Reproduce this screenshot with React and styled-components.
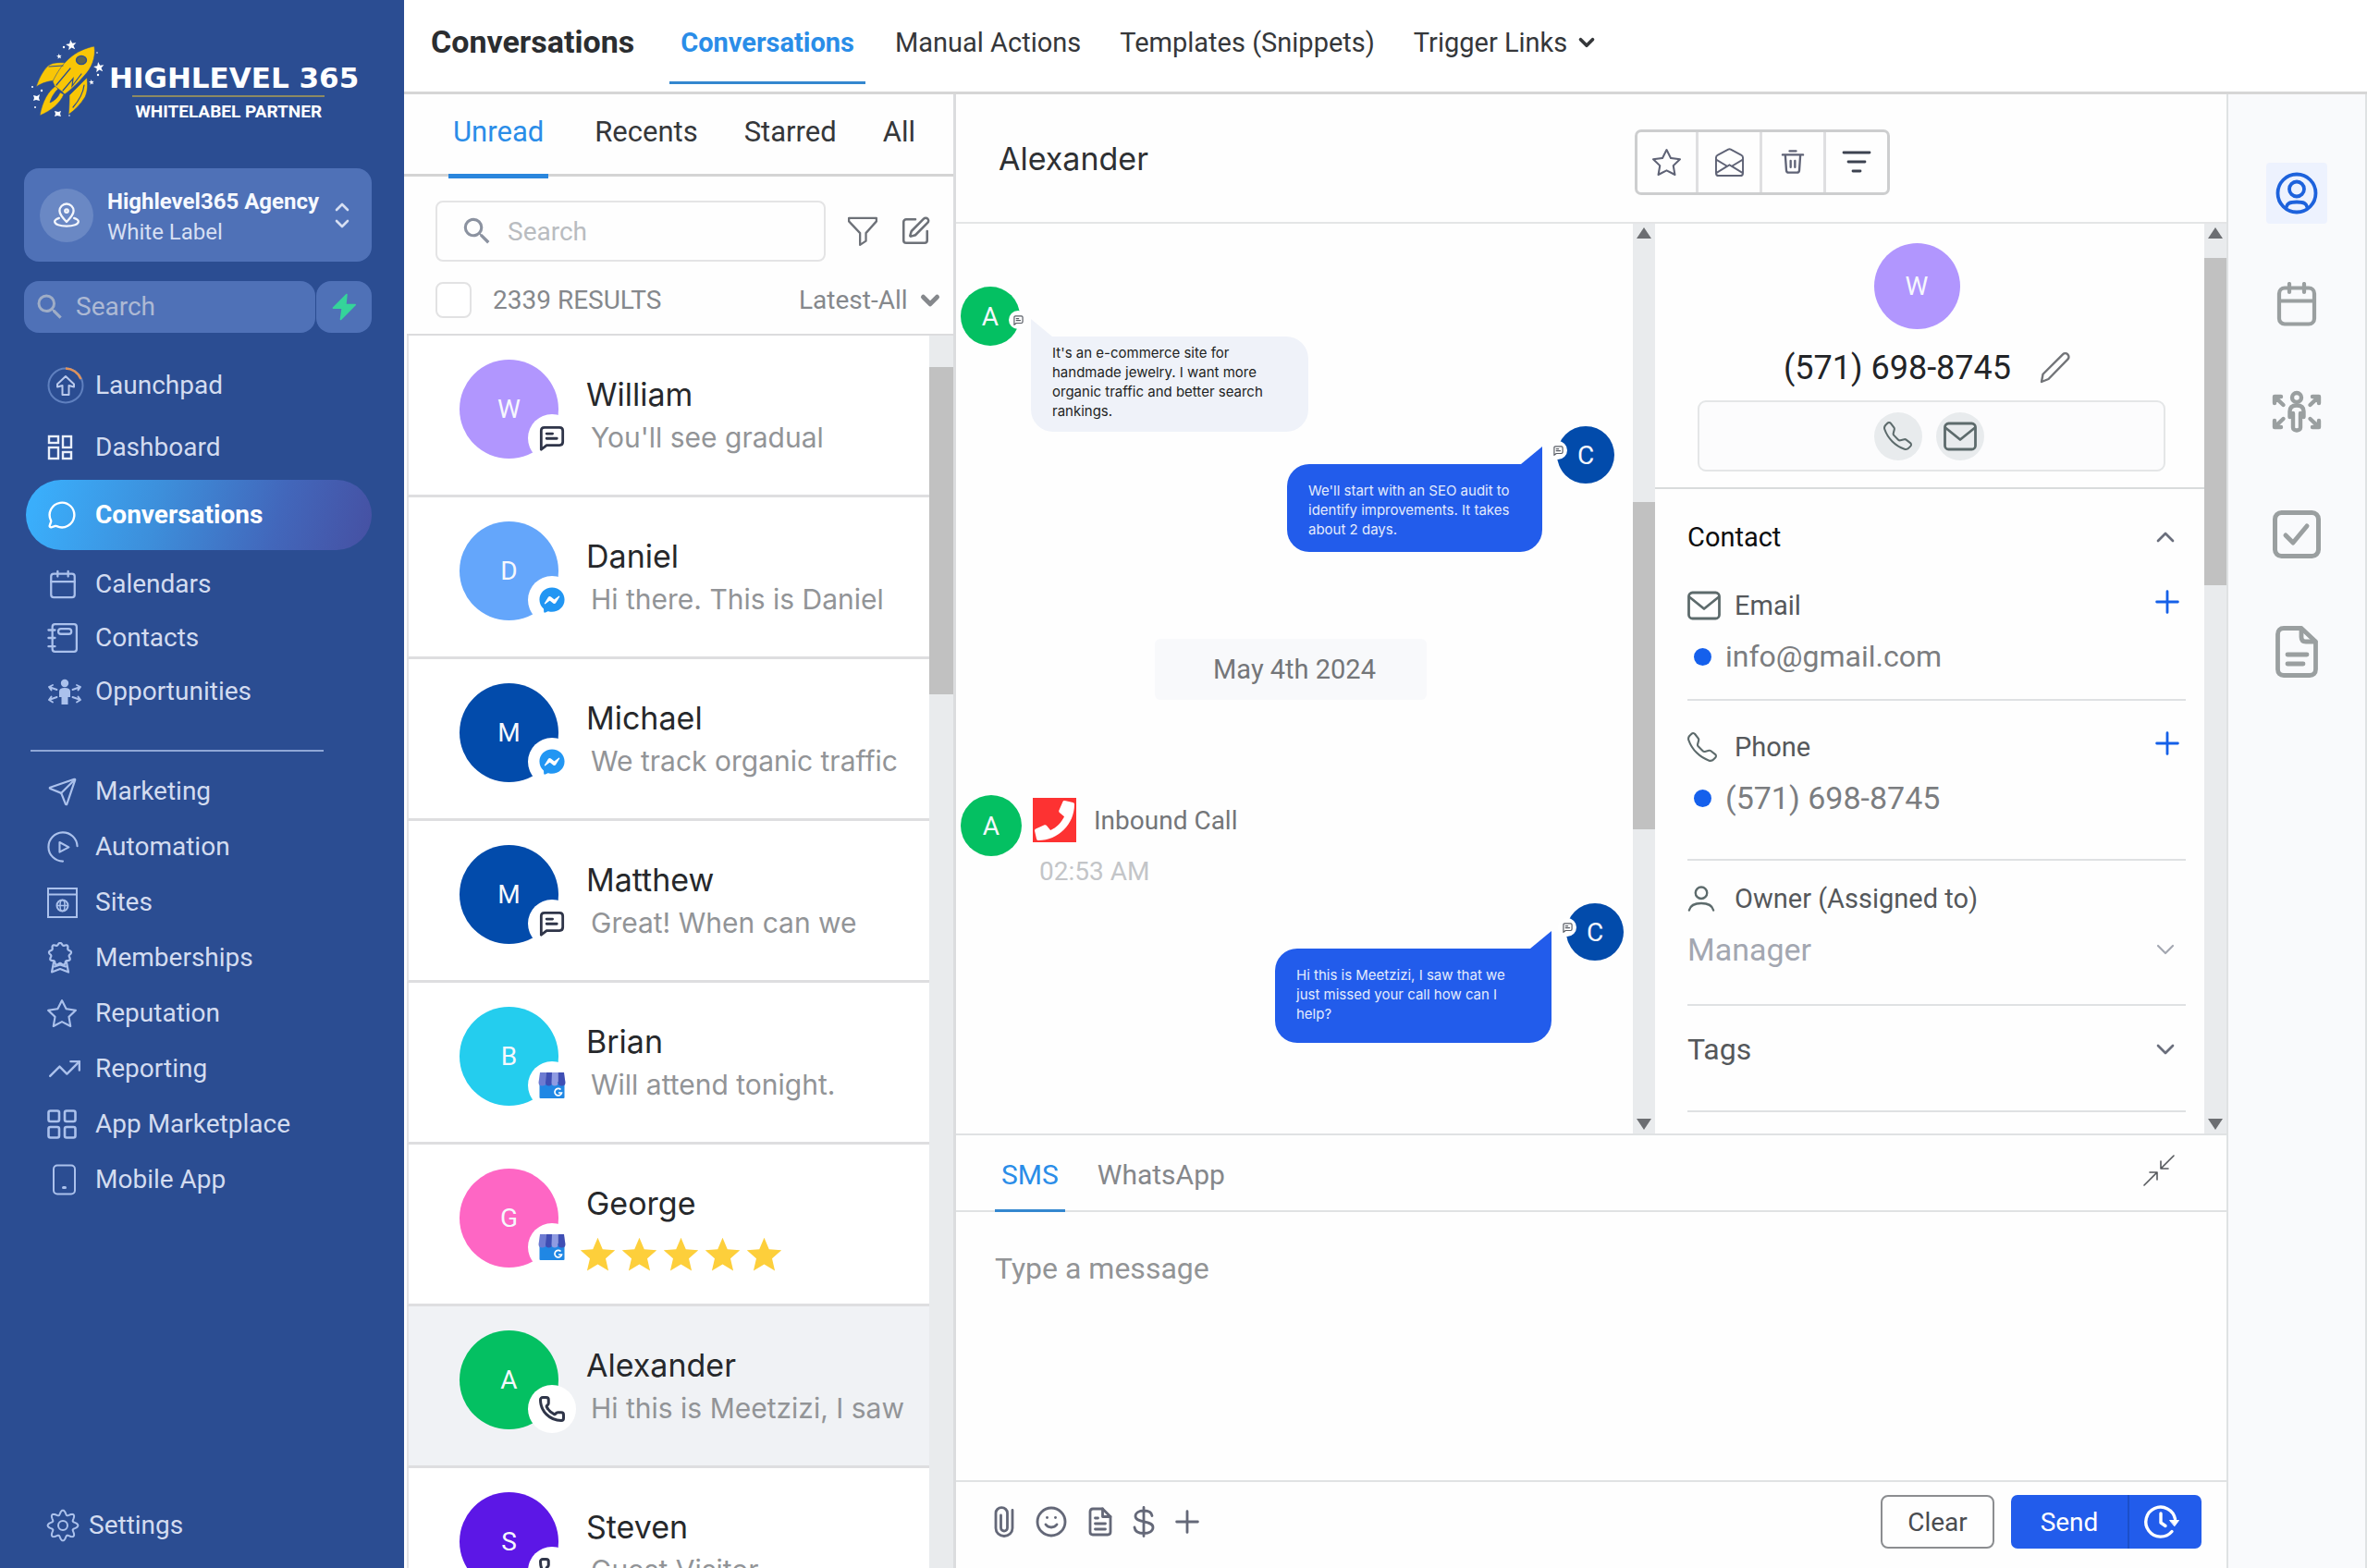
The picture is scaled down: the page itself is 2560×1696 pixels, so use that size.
import React, { useState } from 'react';
import styled, { createGlobalStyle, css } from 'styled-components';
import {
  Calendar,
  ChevronDown,
  ChevronUp,
  MessageCircle,
  Phone,
  Send,
  Smile,
  SquarePen,
  TrendingUp,
} from 'lucide-react';
import { FaFacebookMessenger, FaPhone } from 'react-icons/fa';
import { BsEnvelopeOpen, BsStar, BsTelephone } from 'react-icons/bs';
import { MdSearch, MdStar } from 'react-icons/md';

const GlobalStyle = createGlobalStyle`
  * {
    box-sizing: border-box;
  }

  body {
    margin: 0;
    font-family: Roboto, 'Liberation Sans', sans-serif;
    color: #2e3033;
    background-color: #fefefe;
  }

  button, input, select, textarea {
    font: inherit;
    color: inherit;
    background: none;
    border: none;
    padding: 0;
    margin: 0;
    outline: none;
  }

  button {
    cursor: pointer;
  }

  a {
    color: inherit;
    text-decoration: none;
  }

  ul {
    list-style: none;
    margin: 0;
    padding: 0;
  }

  h1, h2, h3, p {
    margin: 0;
    font-size: inherit;
    font-weight: 400;
  }

  svg {
    display: block;
    flex-shrink: 0;
  }
`;

/* ---------- icons ---------- */

const Stroke = ({ w = 32, h, box = '0 0 24 24', sw = 2, children }) => (
  <svg
    width={w}
    height={h || w}
    viewBox={box}
    fill="none"
    stroke="currentColor"
    strokeWidth={sw}
    strokeLinecap="round"
    strokeLinejoin="round"
    aria-hidden="true"
  >
    {children}
  </svg>
);

const star = (cx, cy, r) => {
  const points = [];
  for (let i = 0; i < 10; i++) {
    const a = (Math.PI / 5) * i - Math.PI / 2 - 0.15;
    const d = i % 2 ? r * 0.42 : r;
    points.push(`${cx + d * Math.cos(a)},${cy + d * Math.sin(a)}`);
  }
  return points.join(' ');
};

const RocketLogo = () => (
  <svg width="84" height="96" viewBox="4 2 84 96" aria-hidden="true">
    <g fill="#f9c606" stroke="#2b4d92" strokeWidth="0.6">
      <path d="M46 36 C36 35 30 36 26 39 C20 45 16 53 13 62 C20 57 27 56 33 55 Z" />
      <path d="M68 52 C69 60 69 66 66 73 C61 81 55 87 48 92 C49 84 49 77 49 71 Z" />
      <path d="M34 61 C26 67 20 77 17 93 C29 88 39 80 43 70 L39 68 C37 73 33 77 28 79 C30 72 33 68 37 64 Z" />
      <path d="M76 18 C78 30 73 42 65 50 C58 58 52 64 44 70 L41 67 L33 61 L31 56 C36 46 41 38 49 31 C57 24 66 20 76 18 Z" />
    </g>
    <g fill="none" stroke="#2b4d92" strokeWidth="1.2" strokeLinecap="round">
      <path d="M35 60 L50 42 M42 66 L53 53 L52 61 L62 48 M27 40 L42 39 M65 60 C64 68 60 76 53 84" />
    </g>
    <ellipse cx="62" cy="33" rx="5.5" ry="4.6" fill="#5c6458" stroke="#2b4d92" strokeWidth="1.4" />
    <g fill="#ffffff">
      <polygon points={star(51, 17, 6)} />
      <polygon points={star(81, 41, 6)} />
      <polygon points={star(38, 29, 3)} />
      <polygon points={star(73, 57, 3)} />
      <path d="M10 71 L14 72 L17 70 L16 74 L17 77 L13 76 L10 77 L11 74 Z" />
      <path d="M33 88 L37 89 L40 88 L39 91 L40 94 L36 93 L33 94 L34 91 Z" />
      <circle cx="43" cy="19" r="1.2" />
      <circle cx="19" cy="66" r="1.2" />
      <circle cx="80" cy="49" r="1.2" />
      <circle cx="12" cy="84" r="1" />
      <circle cx="9" cy="62" r="1" />
      <circle cx="79" cy="25" r="0.8" />
      <circle cx="49" cy="93" r="0.8" />
    </g>
  </svg>
);

const PlaceIcon = () => (
  <Stroke w={28} sw={2}>
    <path d="M12 18C8.500 14.500 5.500 11.200 5.500 7.800a6.500 6.500 0 0 1 13 0c0 3.400-3 6.700-6.500 10.200z" />
    <circle cx="12" cy="7.800" r="1.500" />
    <path d="M5 14.500c-2.300.8-4 1.900-4 3.300 0 2.400 4.900 4.200 11 4.200s11-1.800 11-4.200c0-1.400-1.700-2.500-4-3.300" />
  </Stroke>
);

const BoltIcon = () => (
  <svg width="28" height="30" viewBox="0 0 24 26" fill="#35d49a" stroke="#35d49a" strokeWidth="1.500" strokeLinejoin="round" aria-hidden="true">
    <path d="M14.500 1.500 2 14h8.500L9 24.500 22.500 11h-9z" />
  </svg>
);

const LaunchIcon = () => (
  <svg width="40" height="40" viewBox="0 0 40 40" fill="none" aria-hidden="true">
    <circle cx="20" cy="20" r="18.500" stroke="#5f80bf" strokeWidth="2" />
    <path d="M20 1.500 A18.500 18.500 0 0 1 36.500 13" stroke="#e0925a" strokeWidth="2.500" />
    <path
      d="M20 10 L29 18.500 V21.500 L23.500 20 V30 H16.500 V20 L11 21.500 V18.500 Z"
      stroke="#b9c9ec"
      strokeWidth="2"
      strokeLinejoin="round"
    />
  </svg>
);

const DashboardIcon = () => (
  <svg width="28" height="28" viewBox="0 0 28 28" fill="none" stroke="#e9effb" strokeWidth="2.400" aria-hidden="true">
    <rect x="2" y="2" width="10" height="7" />
    <rect x="17" y="2" width="9" height="12" />
    <rect x="2" y="14" width="10" height="12" />
    <rect x="17" y="19" width="9" height="7" />
  </svg>
);

const ContactsIcon = () => (
  <Stroke w={34} sw={1.6}>
    <rect x="4" y="1.500" width="18.500" height="21" rx="2" />
    <rect x="8.500" y="5" width="10" height="4" rx="2" />
    <path d="M1 6h5M1 12h5M1 18.500h5" />
  </Stroke>
);

const PeopleArrowsIcon = () => (
  <svg width="38" height="32" viewBox="0 0 38 32" aria-hidden="true">
    <g fill="currentColor">
      <circle cx="19" cy="7" r="4.200" />
      <path d="M13 16c0-2.500 2-4 6-4s6 1.500 6 4v6h-2.500v8h-7v-8H13z" />
    </g>
    <g fill="none" stroke="currentColor" strokeWidth="1.900" strokeLinecap="round" strokeLinejoin="round">
      <path d="M10.500 14 2 11M6 9l-4 2 2.500 3.500M10.500 22 2 25M4.500 21.500 2 25l4 2.500M27.500 14 36 11M32 9l4 2-2.500 3.500M27.500 22l8.500 3M33.500 21.500 36 25l-4 2.500" />
    </g>
  </svg>
);

const AutomationIcon = () => (
  <Stroke w={34} sw={1.5}>
    <path d="M12 23A11 11 0 1 1 23 11.500" />
    <path d="M9.500 8.500v7.500l7-3.700z" />
  </Stroke>
);

const SitesIcon = () => (
  <svg width="33" height="33" viewBox="0 0 33 33" fill="none" stroke="currentColor" strokeWidth="2" aria-hidden="true">
    <rect x="1" y="1" width="31" height="31" />
    <path d="M1 7.500h31" />
    <circle cx="16.500" cy="19.500" r="6" />
    <ellipse cx="16.500" cy="19.500" rx="2.500" ry="6" strokeWidth="1.500" />
    <path d="M10.500 19.500h12" strokeWidth="1.500" />
  </svg>
);

const scalloped = (cx, cy, r, depth, lobes) => {
  let d = '';
  for (let i = 0; i <= 120; i++) {
    const a = (Math.PI * 2 * i) / 120;
    const k = r + depth * Math.cos(lobes * a);
    d += `${i ? 'L' : 'M'}${(cx + k * Math.sin(a)).toFixed(2)} ${(cy - k * Math.cos(a)).toFixed(2)}`;
  }
  return `${d}Z`;
};

const RibbonIcon = () => (
  <Stroke w={28} h={34} box="0 0 28 34" sw={2.2}>
    <path d={scalloped(14, 13, 11, 1.2, 9)} />
    <path d="M7 22 L5 32.500 L14 29 L23 32.500 L21 22 M8 26.500 L14 24.500 L20 26.500" />
  </Stroke>
);

const GridIcon = () => (
  <Stroke w={32} box="0 0 32 32" sw={2.6}>
    <rect x="1.500" y="1.500" width="11.500" height="11.500" rx="2" />
    <rect x="19" y="1.500" width="11.500" height="11.500" rx="2" />
    <rect x="1.500" y="19" width="11.500" height="11.500" rx="2" />
    <rect x="19" y="19" width="11.500" height="11.500" rx="2" />
  </Stroke>
);

const MobileIcon = () => (
  <Stroke w={38} h={34} box="0 0 38 34" sw={2}>
    <rect x="7" y="1.500" width="23" height="31" rx="4" />
    <path d="M17.500 25.500h2" strokeWidth="3" />
  </Stroke>
);

const GearIcon = () => (
  <Stroke w={36} box="0 0 36 36" sw={2}>
    <path d={scalloped(18, 18, 14, 2.4, 8)} />
    <circle cx="18" cy="18" r="5" />
  </Stroke>
);

const SmsIcon = ({ size = 28, sw = 2.4 }) => (
  <Stroke w={size} sw={sw}>
    <path d="M2 22.500V5c0-2 1-3 3-3h14c2 0 3 1 3 3v10.500c0 2-1 3-3 3H7z" />
    <path d="M7 7.800h5.500M7 12.200h9.500" />
  </Stroke>
);

const FunnelIcon = () => (
  <Stroke w={34} sw={1.6}>
    <path d="M1.500 2h21v2.500l-8 9v6L10 22.500v-9l-8.500-9z" />
  </Stroke>
);

const TrashIcon = () => (
  <Stroke w={28} sw={2}>
    <path d="M2.500 5.500h19M9 2h6M5 5.500l1 14.500c.1 1.300 1 2 2.200 2h7.600c1.200 0 2.100-.7 2.200-2l1-14.500M10 11v6M14 11v6" />
  </Stroke>
);

const LinesIcon = () => (
  <Stroke w={32} h={26} box="0 0 32 26" sw={2.8}>
    <path d="M2 3h28M7 13h18M12 23h8" />
  </Stroke>
);

const PencilIcon = () => (
  <Stroke w={36} sw={1.6}>
    <path d="M2 22l1-5.500L17.300 2.200c1-1 2.600-1 3.600 0s1 2.600 0 3.600L7 20z" />
  </Stroke>
);

const MailIcon = () => (
  <Stroke w={36} h={32} box="0 0 36 32" sw={2.8}>
    <rect x="1.500" y="2" width="33" height="28" rx="4" />
    <path d="M2.500 7 L18 19.500 L33.500 7" />
  </Stroke>
);

const PersonIcon = () => (
  <Stroke w={30} sw={1.9}>
    <circle cx="12" cy="7" r="5" />
    <path d="M1.500 22c1-4 5-6 10.500-6s9.500 2 10.500 6" />
  </Stroke>
);

const PlusIcon = () => (
  <Stroke w={26} sw={2.6}>
    <path d="M12 1.500v21M1.500 12h21" />
  </Stroke>
);

const ProfileIcon = () => (
  <Stroke w={46} box="0 0 46 46" sw={3.8}>
    <circle cx="23" cy="23" r="20.500" />
    <circle cx="23" cy="18.500" r="8" />
    <path d="M11.500 38.500c1-4.500 4-6 11.500-6s10.500 1.500 11.500 6" />
  </Stroke>
);

const RailCalendarIcon = () => (
  <Stroke w={44} h={48} box="0 0 44 48" sw={4.2}>
    <rect x="3" y="6.500" width="38" height="39" rx="6" />
    <path d="M3 20.500h38M14 2v9M30 2v9" />
  </Stroke>
);

const RailPeopleIcon = () => (
  <Stroke w={54} h={46} box="0 0 54 46" sw={4.4}>
    <circle cx="27" cy="8" r="5" />
    <path d="M19.500 29v-6c0-4 2.500-6.500 7.500-6.500s7.500 2.500 7.500 6.500v6M23 25v15.500c0 4 8 4 8 0V25" />
    <path d="M3 14V7h7M4 8l8.500 8M51 14V7h-7M50 8l-8.500 8M3 33v7h7M4 39l8.500-8M51 33v7h-7M50 39l-8.500-8" />
  </Stroke>
);

const RailCheckIcon = () => (
  <Stroke w={52} box="0 0 52 52" sw={5}>
    <rect x="2.500" y="2.500" width="47" height="47" rx="7" />
    <path d="M14 27l8 8 15-18" />
  </Stroke>
);

const RailFileIcon = () => (
  <Stroke w={46} h={56} box="0 0 46 56" sw={4.8}>
    <path d="M28 2.500H9c-4 0-6.500 2.500-6.500 6.500v38c0 4 2.500 6.500 6.500 6.500h28c4 0 6.500-2.500 6.500-6.500V17z" />
    <path d="M28 3v9c0 3.500 1.500 5 5 5h10M13 31h21M13 41h17" />
  </Stroke>
);

const CollapseIcon = () => (
  <Stroke w={36} box="0 0 36 36" sw={1.6}>
    <path d="M34 2 20 16M20 8v8h8M2 34l14-14M8 20h8v8" />
  </Stroke>
);

const ClipIcon = () => (
  <Stroke w={22} h={34} box="0 0 22 34" sw={2.8}>
    <path d="M20 4.500v19.500a9 8.500 0 0 1-18 0V7.500a6.200 5.800 0 0 1 12.500 0v16a3.500 3.500 0 0 1-7 0V10" />
  </Stroke>
);

const DocIcon = () => (
  <Stroke w={26} h={32} box="0 0 26 32" sw={2.8}>
    <path d="M15.500 2H5C3 2 2 3 2 5v22c0 2 1 3 3 3h16c2 0 3-1 3-3V10.500z" />
    <path d="M15.500 2v8.500H24M7.500 12h3M7.500 18h11M7.500 24h11" />
  </Stroke>
);

const DollarIcon = () => (
  <Stroke w={24} h={34} box="0 0 24 34" sw={2.8}>
    <path d="M12 1.500v31M21 10.500c-.5-3.500-4-5.500-9-5.500s-9 2.200-9 6c0 7.500 19 4 19 12 0 4-4 6.500-10 6.500S2.500 27 2 23" />
  </Stroke>
);

const ScheduleIcon = () => (
  <Stroke w={40} box="0 0 40 40" sw={3.4}>
    <path d="M32 30.500A16 16 0 1 1 35.500 17M20 11v10l5 3.500" />
    <path d="M30 18.500h9.500L35 24.500z" fill="currentColor" strokeWidth="1" />
  </Stroke>
);

const ShopIcon = () => (
  <svg width="30" height="28" viewBox="0 0 30 28" aria-hidden="true">
    <rect x="1.500" y="10" width="27" height="18" rx="1" fill="#2087e4" />
    <path d="M2 0h6.500v11a4 3.500 0 0 1-8 0z" fill="#6d7bd2" />
    <path d="M8.500 0H15v11a3.500 3.500 0 0 1-7 0z" fill="#3f4eb4" />
    <path d="M15 0h6.500v11a3.500 3.500 0 0 1-7 0z" fill="#8f9be2" />
    <path d="M21.500 0H28l1.500 11a4 3.500 0 0 1-8 0z" fill="#3f4eb4" />
    <path d="M24.500 18.500a3.800 3.800 0 1 0 1 3.500h-3.500" fill="none" stroke="#ffffff" strokeWidth="1.700" />
  </svg>
);

const badgeIcons = {
  sms: <SmsIcon />,
  messenger: <FaFacebookMessenger size={28} color="#2196f3" />,
  google: <ShopIcon />,
  phone: <Phone size={30} strokeWidth={2.4} />,
};

/* ---------- layout ---------- */

const Page = styled.div`
  display: flex;
  height: 100vh;
  overflow: hidden;
`;

const Main = styled.div`
  flex: 1;
  min-width: 0;
  display: flex;
  flex-direction: column;
`;

const Workspace = styled.div`
  flex: 1;
  min-height: 0;
  display: flex;
`;

/* ---------- sidebar ---------- */

const Sidebar = styled.aside`
  display: flex;
  flex-direction: column;
  width: 437px;
  padding: 34px 35px 28px 26px;
  background-color: #2b4d92;
  color: #d6dff3;
  font-size: 28px;
  line-height: 34px;
`;

const Logo = styled.a`
  display: flex;
  align-items: center;
  gap: 4px;
  height: 96px;
  padding-left: 4px;
  color: #ffffff;
`;

const LogoText = styled.div`
  display: flex;
  flex-direction: column;
  align-items: center;
  padding-top: 34px;
`;

const LogoName = styled.span`
  font-family: 'DejaVu Sans', sans-serif;
  font-size: 31px;
  font-weight: 700;
  line-height: 34px;
  white-space: nowrap;
`;

const LogoSub = styled.span`
  margin: 2px 12px 0 0;
  padding: 5px 3px 0;
  border-top: 2px solid #8c8a62;
  font-size: 19px;
  font-weight: 700;
  line-height: 22px;
`;

const AccountCard = styled.button`
  display: flex;
  align-items: center;
  gap: 15px;
  height: 101px;
  margin-top: 52px;
  padding: 0 22px 0 17px;
  border-radius: 16px;
  background-color: #4f71b7;
  text-align: left;
  font-size: 24px;
  line-height: 33px;
`;

const AccountIcon = styled.span`
  display: flex;
  align-items: center;
  justify-content: center;
  width: 58px;
  height: 58px;
  border-radius: 50%;
  background-color: #6a88c4;
  color: #f3f6fc;
`;

const AccountText = styled.span`
  flex: 1;
  display: flex;
  flex-direction: column;
  padding-top: 4px;
  white-space: nowrap;

  strong {
    color: #f6f9ff;
    font-weight: 700;
  }
`;

const SideSearch = styled.div`
  display: flex;
  gap: 1px;
  margin-top: 21px;
`;

const SideField = styled.label`
  flex: 1;
  display: flex;
  align-items: center;
  gap: 10px;
  min-width: 0;
  height: 56px;
  padding: 0 10px;
  border-radius: 16px;
  background-color: #4f71b7;
  color: #9fadc6;

  input {
    width: 100%;
    min-width: 0;
  }

  input::placeholder {
    color: #adb9d4;
    opacity: 1;
  }
`;

const BoltButton = styled.button`
  display: flex;
  align-items: center;
  justify-content: center;
  width: 60px;
  border-radius: 16px;
  background-color: #4f71b7;
`;

const NavList = styled.ul`
  &:first-of-type {
    margin-top: 23px;
  }
`;

const NavLink = styled.a`
  display: flex;
  align-items: center;
  height: ${({ $height }) => $height}px;
  margin-left: 2px;
  padding-left: 23px;
  color: #d3dcf0;

  ${({ $active }) =>
    $active &&
    css`
      margin: 2px 0 8px 2px;
      border-radius: 38px;
      color: #ffffff;
      font-weight: 700;
      background: linear-gradient(105deg, #3aaefb 4%, #3d8fdb 38%, #4267bb 72%, #4650a2 100%);
    `}
`;

const NavIcon = styled.span`
  display: flex;
  align-items: center;
  width: 52px;
  color: #abc1ec;
`;

const NavDivider = styled.hr`
  width: 317px;
  height: 2px;
  margin: 34px 0 13px 7px;
  border: none;
  background-color: #8fa7d6;
`;

const SettingsLink = styled.a`
  display: flex;
  align-items: center;
  gap: 10px;
  margin-top: auto;
  padding-left: 24px;
  color: #d3dcf0;

  svg {
    color: #abc1ec;
  }
`;

/* ---------- top bar ---------- */

const TopBar = styled.header`
  display: flex;
  height: 102px;
  padding-left: 29px;
  border-bottom: 3px solid #d6d6d6;
  background-color: #ffffff;
`;

const PageTitle = styled.h1`
  height: 91px;
  margin-right: 38px;
  font-size: 34px;
  font-weight: 700;
  line-height: 91px;
  color: #2b2d30;
`;

const TopTabs = styled.nav`
  display: flex;
  gap: 22px;
`;

const TopTab = styled.a`
  display: flex;
  align-items: center;
  gap: 8px;
  height: 91px;
  padding: 3px ${({ $active }) => ($active ? 12 : 10)}px 0;
  border-bottom: 3px solid ${({ $active }) => ($active ? '#3487cf' : 'transparent')};
  color: ${({ $active }) => ($active ? '#2a8de8' : '#35373a')};
  font-size: 29px;
  font-weight: ${({ $active }) => ($active ? 700 : 400)};
  white-space: nowrap;
`;

/* ---------- conversation list ---------- */

const ListPanel = styled.section`
  display: flex;
  flex-direction: column;
  width: 597px;
  border-right: 3px solid #dbdcde;
`;

const ListTabs = styled.div`
  display: flex;
  gap: 50px;
  height: 89px;
  padding-left: 48px;
  border-bottom: 3px solid #d4d4d4;
`;

const ListTab = styled.button`
  position: relative;
  padding: 0 5px 6px;
  color: ${({ $active }) => ($active ? '#2a8de8' : '#35373a')};
  font-size: 31px;

  & + & {
    padding: 0 0 6px;
  }

  &::after {
    content: '';
    position: absolute;
    right: 0;
    bottom: -5px;
    left: 0;
    height: 5px;
    background-color: ${({ $active }) => ($active ? '#2a86dd' : 'transparent')};
  }
`;

const ListTools = styled.div`
  display: flex;
  align-items: center;
  gap: 23px;
  padding: 26px 24px 0 34px;
  color: #6d7178;
`;

const ListSearch = styled.label`
  flex: 1;
  display: flex;
  align-items: center;
  gap: 14px;
  height: 66px;
  min-width: 0;
  padding: 0 24px;
  border: 2px solid #e4e4e5;
  border-radius: 8px;
  color: #8b92a0;
  font-size: 28px;

  input {
    width: 100%;
    min-width: 0;
  }

  input::placeholder {
    color: #b9bcc0;
    opacity: 1;
  }
`;

const ResultsBar = styled.div`
  display: flex;
  align-items: center;
  padding: 22px 10px 17px 34px;
  color: #85888c;
  font-size: 28px;
`;

const ResultsLabel = styled.label`
  flex: 1;
  display: flex;
  align-items: center;
  gap: 23px;
`;

const CheckBox = styled.input`
  appearance: none;
  width: 39px;
  height: 39px;
  border: 2px solid #e2e2e3;
  border-radius: 8px;
  background-color: #ffffff;
`;

const SortPicker = styled.label`
  display: flex;
  align-items: center;
  gap: 9px;

  select {
    appearance: none;
  }
`;

const ListBody = styled.div`
  flex: 1;
  min-height: 0;
  display: flex;
  margin-left: 3px;
  border-top: 2px solid #dcdcde;
  overflow: hidden;
`;

const Rows = styled.ul`
  flex: 1;
  min-width: 0;
`;

const Row = styled.a`
  display: flex;
  gap: 30px;
  height: 175px;
  padding: 26px 0 0 55px;
  border-bottom: 3px solid #dedee0;
  border-left: 2px solid #e3e3e5;
  background-color: ${({ $active }) => ($active ? '#f0f2f5' : '#ffffff')};
`;

const Avatar = styled.span`
  position: relative;
  flex-shrink: 0;
  display: flex;
  align-items: center;
  justify-content: center;
  width: ${({ $size }) => $size}px;
  height: ${({ $size }) => $size}px;
  border-radius: 50%;
  background-color: ${({ $color }) => $color};
  color: #f6f8fd;
  font-size: 28px;
`;

const Badge = styled.span`
  position: absolute;
  right: -19px;
  bottom: -4px;
  display: flex;
  align-items: center;
  justify-content: center;
  width: 52px;
  height: 52px;
  border-radius: 50%;
  background-color: #ffffff;
  color: #2f3549;
`;

const RowText = styled.div`
  display: flex;
  flex-direction: column;
  gap: 8px;
  padding-top: 18px;
  white-space: nowrap;
`;

const RowName = styled.h3`
  font-family: Inter, Roboto, sans-serif;
  font-size: 34px;
  line-height: 40px;
  color: #26282b;
`;

const RowPreview = styled.p`
  padding-left: 5px;
  font-family: Inter, Roboto, sans-serif;
  font-size: 30px;
  line-height: 36px;
  color: #929497;
`;

const Stars = styled.div`
  display: flex;
  margin-left: -10px;
  padding-top: 5px;
  color: #fdcf3b;
`;

/* ---------- scrollbar ---------- */

const Track = styled.div`
  display: flex;
  flex-direction: column;
  align-items: center;
  width: ${({ $width }) => $width}px;
  background-color: #e9ebed;
`;

const Arrow = styled.svg`
  margin: 4px 0;
  fill: #6c6e72;
`;

const Thumb = styled.div`
  width: 100%;
  height: ${({ $height }) => $height}px;
  margin: ${({ $top }) => $top}px 0 auto;
  background-color: #c1c1c1;
`;

const ScrollBar = ({ width = 24, top, height, arrows }) => (
  <Track $width={width}>
    {arrows && (
      <Arrow width="16" height="12" viewBox="0 0 16 12">
        <path d="M8 0l8 12H0z" />
      </Arrow>
    )}
    <Thumb $top={top} $height={height} />
    {arrows && (
      <Arrow width="16" height="12" viewBox="0 0 16 12">
        <path d="M8 12L0 0h16z" />
      </Arrow>
    )}
  </Track>
);

/* ---------- conversation ---------- */

const ChatPanel = styled.section`
  flex: 1;
  min-width: 0;
  display: flex;
  flex-direction: column;
  background-color: #fefefe;
`;

const ChatHeader = styled.div`
  display: flex;
  align-items: center;
  justify-content: space-between;
  height: 140px;
  padding: 0 364px 0 46px;
  border-bottom: 2px solid #e4e5e6;

  h2 {
    font-family: Inter, Roboto, sans-serif;
    font-size: 34px;
  }
`;

const Toolbar = styled.div`
  display: flex;
  height: 71px;
  margin-top: 8px;
  border: 3px solid #cdcecf;
  border-radius: 7px;
  color: #5f6376;
`;

const ToolButton = styled.button`
  display: flex;
  align-items: center;
  justify-content: center;
  width: 69px;

  & + & {
    border-left: 3px solid #dfdfe1;
  }

  &:first-child {
    width: 63px;
  }

  &:last-child {
    color: #3c4250;
  }
`;

const ChatBody = styled.div`
  flex: 1;
  min-height: 0;
  display: flex;
`;

const Messages = styled.div`
  flex: 1;
  min-width: 0;
  padding: 68px 10px 0 5px;
  overflow: hidden;
`;

const Message = styled.div`
  display: flex;
  flex-direction: ${({ $mine }) => ($mine ? 'row-reverse' : 'row')};
  gap: ${({ $mine }) => ($mine ? 16 : 12)}px;
  margin-top: ${({ $top }) => $top}px;
  padding-right: ${({ $inset }) => $inset}px;
`;

const ChatBadge = styled.span`
  position: absolute;
  top: ${({ $mine }) => ($mine ? 16 : 26)}px;
  ${({ $mine }) => ($mine ? 'left: -9px;' : 'right: -8px;')}
  display: flex;
  align-items: center;
  justify-content: center;
  width: 20px;
  height: 20px;
  border-radius: 50%;
  background-color: #ffffff;
  color: #5a5e66;
`;

const Bubble = styled.p`
  position: relative;
  width: ${({ $width }) => $width}px;
  margin-top: ${({ $drop }) => $drop}px;
  padding: ${({ $mine }) => ($mine ? '18px 30px 0 23px' : '7px 36px 0 23px')};
  padding-bottom: ${({ $bottom }) => $bottom}px;
  border-radius: ${({ $mine }) => ($mine ? '24px 0 24px 24px' : '0 24px 24px 24px')};
  background-color: ${({ $mine }) => ($mine ? '#225ceb' : '#eff2f9')};
  color: ${({ $mine }) => ($mine ? '#e3ebfd' : '#1d1f22')};
  font-family: Inter, Roboto, sans-serif;
  font-size: 15px;
  line-height: 21px;

  &::before {
    content: '';
    position: absolute;
    bottom: 100%;
    ${({ $mine }) => ($mine ? 'right: 0;' : 'left: 0;')}
    width: 23px;
    height: 19px;
    background-color: inherit;
    clip-path: ${({ $mine }) =>
      $mine ? 'polygon(100% 0, 100% 100%, 0 100%)' : 'polygon(0 0, 100% 100%, 0 100%)'};
  }
`;

const DatePill = styled.div`
  width: 294px;
  margin: 94px 0 103px 210px;
  padding-left: 8px;
  border-radius: 6px;
  background-color: #f8f9fb;
  color: #747679;
  font-size: 29px;
  line-height: 66px;
  text-align: center;
`;

const CallInfo = styled.div`
  display: grid;
  grid-template-columns: 47px auto;
  column-gap: 19px;
  row-gap: 16px;
  align-items: center;
  padding-top: 3px;
  font-size: 28px;
  color: #747679;

  time {
    grid-column: 1 / -1;
    padding-left: 7px;
    line-height: 32px;
    color: #c3c5c8;
  }
`;

const CallIcon = styled.span`
  display: flex;
  align-items: center;
  justify-content: center;
  width: 47px;
  height: 48px;
  background-color: #fd3232;
  color: #ffffff;
`;

/* ---------- contact details ---------- */

const Details = styled.div`
  width: 594px;
  overflow: hidden;
`;

const Profile = styled.div`
  display: flex;
  flex-direction: column;
  align-items: center;
  padding: 21px 42px 17px 46px;
  border-bottom: 2px solid #d9dbdc;
`;

const ProfileAvatar = styled(Avatar)`
  margin-right: 32px;
`;

const ProfileName = styled.div`
  display: flex;
  align-items: center;
  gap: 30px;
  margin: 22px 8px 15px 0;
  font-size: 36px;
  line-height: 40px;
  color: #222427;

  button {
    color: #727478;
  }
`;

const ContactActions = styled.div`
  align-self: stretch;
  display: flex;
  align-items: center;
  justify-content: center;
  gap: 15px;
  height: 77px;
  padding-right: 6px;
  border: 2px solid #e4e6e7;
  border-radius: 9px;
  background-color: #fcfcfd;
`;

const RoundButton = styled.button`
  display: flex;
  align-items: center;
  justify-content: center;
  width: 52px;
  height: 52px;
  border-radius: 50%;
  background-color: #e8ebed;
  color: #5d6b6c;
`;

const Section = styled.div`
  margin: 0 20px 0 35px;
  padding: ${({ $top, $bottom }) => `${$top}px 0 ${$bottom}px`};
  border-bottom: ${({ $line }) => ($line ? '2px solid #dfe1e3' : 'none')};
`;

const FieldHead = styled.div`
  display: flex;
  align-items: center;
  justify-content: space-between;
  height: 36px;
  padding-right: 6px;
  font-size: ${({ $large }) => ($large ? 32 : 29)}px;
  color: ${({ $strong }) => ($strong ? '#0c0d0e' : '#55585b')};

  h3 {
    display: flex;
    align-items: center;
    gap: 15px;
  }

  svg {
    color: #5d6b6c;
  }

  button svg {
    color: #6a6e7c;
  }
`;

const FieldIcon = styled.span`
  width: 36px;
`;

const AddButton = styled.button`
  padding: 0 1px 8px 0;

  && svg {
    color: #1560e8;
  }
`;

const FieldValue = styled.div`
  display: flex;
  align-items: center;
  gap: 15px;
  margin-top: 17px;
  padding-left: 7px;
  font-size: ${({ $wide }) => ($wide ? 34 : 32)}px;
  line-height: 40px;
  color: #7b7d80;

  &::before {
    content: '';
    width: 19px;
    height: 19px;
    border-radius: 50%;
    background-color: #1560ec;
  }
`;

const OwnerPicker = styled.label`
  display: flex;
  align-items: center;
  margin-top: 17px;
  padding-right: 6px;
  color: #a3a7b1;

  select {
    flex: 1;
    height: 40px;
    appearance: none;
    font-size: 34px;
  }
`;

/* ---------- composer ---------- */

const Composer = styled.form`
  display: flex;
  flex-direction: column;
  height: 470px;
  border-top: 2px solid #e0e2e3;
`;

const ComposerTabs = styled.div`
  display: flex;
  height: 83px;
  padding: 0 55px 0 42px;
  border-bottom: 2px solid #e0e2e3;
`;

const ComposerTab = styled.button`
  position: relative;
  margin-right: 28px;
  padding: 3px 7px 0;
  font-size: 30px;
  color: ${({ $active }) => ($active ? '#2a8de8' : '#85878b')};

  &::after {
    content: '';
    position: absolute;
    right: 0;
    bottom: -2px;
    left: 0;
    height: 3px;
    background-color: ${({ $active }) => ($active ? '#3487cf' : 'transparent')};
  }
`;

const CollapseButton = styled.button`
  margin-left: auto;
  padding-bottom: 6px;
  color: #55585c;
`;

const MessageBox = styled.textarea`
  flex: 1;
  padding: 41px 42px;
  resize: none;
  font-size: 32px;
  line-height: 40px;

  &::placeholder {
    color: #929496;
    opacity: 1;
  }
`;

const ComposerFoot = styled.div`
  display: flex;
  align-items: center;
  height: 95px;
  padding: 0 27px 7px 41px;
  border-top: 2px solid #e0e2e3;
  color: #646878;
`;

const FootTools = styled.div`
  flex: 1;
  display: flex;
  align-items: center;
  gap: 22px;
`;

const ClearButton = styled.button`
  width: 123px;
  height: 58px;
  margin-right: 18px;
  border: 2px solid #8b8d90;
  border-radius: 8px;
  font-size: 28px;
  color: #4a4c50;
`;

const SendGroup = styled.div`
  display: flex;
  height: 58px;
  border-radius: 7px;
  background-color: #225ceb;
  color: #ffffff;
  overflow: hidden;
`;

const SendButton = styled.button`
  display: flex;
  align-items: center;
  justify-content: center;
  width: ${({ $icon }) => ($icon ? 80 : 126)}px;
  padding-right: ${({ $icon }) => ($icon ? 10 : 0)}px;
  border-left: ${({ $icon }) => ($icon ? '2px solid #1c4fc9' : 'none')};
  font-size: 28px;
`;

/* ---------- right rail ---------- */

const Rail = styled.nav`
  display: flex;
  flex-direction: column;
  align-items: center;
  width: 152px;
  padding-top: 74px;
  border-right: 2px solid #dfe2e3;
  border-left: 2px solid #dfe2e3;
  background-color: #f9fafc;
`;

const RailButton = styled.button`
  display: flex;
  align-items: center;
  justify-content: center;
  width: 66px;
  height: 66px;
  margin-bottom: ${({ $gap }) => $gap}px;
  border-radius: 4px;
  background-color: ${({ $active }) => ($active ? '#edf2fe' : 'transparent')};
  color: ${({ $active }) => ($active ? '#1d62dc' : '#9a9fa0')};
`;

/* ---------- data ---------- */

const mainNav = [
  { label: 'Launchpad', icon: <LaunchIcon />, height: 67 },
  { label: 'Dashboard', icon: <DashboardIcon />, height: 67 },
  { label: 'Conversations', icon: <MessageCircle size={32} color="#ffffff" strokeWidth={1.8} />, height: 76, active: true },
  { label: 'Calendars', icon: <Calendar size={34} strokeWidth={1.6} />, height: 58 },
  { label: 'Contacts', icon: <ContactsIcon />, height: 58 },
  { label: 'Opportunities', icon: <PeopleArrowsIcon />, height: 58 },
];

const moreNav = [
  { label: 'Marketing', icon: <Send size={33} strokeWidth={1.6} /> },
  { label: 'Automation', icon: <AutomationIcon /> },
  { label: 'Sites', icon: <SitesIcon /> },
  { label: 'Memberships', icon: <RibbonIcon /> },
  { label: 'Reputation', icon: <BsStar size={32} /> },
  { label: 'Reporting', icon: <TrendingUp size={38} strokeWidth={1.5} /> },
  { label: 'App Marketplace', icon: <GridIcon /> },
  { label: 'Mobile App', icon: <MobileIcon /> },
];

const conversations = [
  { name: 'William', text: "You'll see gradual", color: '#b196fe', badge: 'sms' },
  { name: 'Daniel', text: 'Hi there. This is Daniel', color: '#64a6fb', badge: 'messenger' },
  { name: 'Michael', text: 'We track organic traffic', color: '#024bab', badge: 'messenger' },
  { name: 'Matthew', text: 'Great! When can we', color: '#024bab', badge: 'sms' },
  { name: 'Brian', text: 'Will attend tonight.', color: '#24cdee', badge: 'google' },
  { name: 'George', stars: 5, color: '#fe66c4', badge: 'google' },
  { name: 'Alexander', text: 'Hi this is Meetzizi, I saw', color: '#04c062', badge: 'phone' },
  { name: 'Steven', text: 'Guest Visitor', color: '#5c17e6', badge: 'phone' },
];

const railItems = [
  { label: 'Contact', icon: <ProfileIcon />, gap: 54 },
  { label: 'Appointments', icon: <RailCalendarIcon />, gap: 50 },
  { label: 'Opportunities', icon: <RailPeopleIcon />, gap: 67 },
  { label: 'Tasks', icon: <RailCheckIcon />, gap: 61 },
  { label: 'Notes', icon: <RailFileIcon />, gap: 0 },
];

const listTabs = ['Unread', 'Recents', 'Starred', 'All'];
const channels = ['SMS', 'WhatsApp'];

const NavItem = ({ label, icon, height = 60, active }) => (
  <li>
    <NavLink href="#" $height={height} $active={active}>
      <NavIcon>{icon}</NavIcon>
      {label}
    </NavLink>
  </li>
);

const ChatMessage = ({ letter, color, mine, top, inset = 0, drop, bottom, width, children }) => (
  <Message $mine={mine} $top={top} $inset={inset}>
    <Avatar $size={mine ? 62 : 64} $color={color}>
      {letter}
      <ChatBadge $mine={mine}>
        <SmsIcon size={11} sw={2.6} />
      </ChatBadge>
    </Avatar>
    <Bubble $mine={mine} $drop={drop} $bottom={bottom} $width={width}>
      {children}
    </Bubble>
  </Message>
);

const App = () => {
  const [tab, setTab] = useState('Unread');
  const [channel, setChannel] = useState('SMS');
  const [selected, setSelected] = useState('Alexander');
  const [panel, setPanel] = useState('Contact');
  const [message, setMessage] = useState('');

  return (
    <Page>
      <GlobalStyle />
      <Sidebar>
        <Logo href="#">
          <RocketLogo />
          <LogoText>
            <LogoName>HIGHLEVEL 365</LogoName>
            <LogoSub>WHITELABEL PARTNER</LogoSub>
          </LogoText>
        </Logo>
        <AccountCard type="button">
          <AccountIcon>
            <PlaceIcon />
          </AccountIcon>
          <AccountText>
            <strong>Highlevel365 Agency</strong>
            White Label
          </AccountText>
          <Stroke w={20} h={28} box="0 0 20 28" sw={2.6}>
            <path d="M4 8l6-6 6 6M4 20l6 6 6-6" />
          </Stroke>
        </AccountCard>
        <SideSearch>
          <SideField>
            <MdSearch size={36} />
            <input type="search" placeholder="Search" aria-label="Search" />
          </SideField>
          <BoltButton type="button" aria-label="Quick actions">
            <BoltIcon />
          </BoltButton>
        </SideSearch>
        <NavList>
          {mainNav.map((item) => (
            <NavItem key={item.label} {...item} />
          ))}
        </NavList>
        <NavDivider />
        <ul>
          {moreNav.map((item) => (
            <NavItem key={item.label} {...item} />
          ))}
        </ul>
        <SettingsLink href="#">
          <GearIcon />
          Settings
        </SettingsLink>
      </Sidebar>

      <Main>
        <TopBar>
          <PageTitle>Conversations</PageTitle>
          <TopTabs>
            <TopTab href="#" $active>
              Conversations
            </TopTab>
            <TopTab href="#">Manual Actions</TopTab>
            <TopTab href="#">Templates (Snippets)</TopTab>
            <TopTab href="#">
              Trigger Links
              <ChevronDown size={26} strokeWidth={3.4} />
            </TopTab>
          </TopTabs>
        </TopBar>

        <Workspace>
          <ListPanel>
            <ListTabs>
              {listTabs.map((name) => (
                <ListTab key={name} type="button" $active={name === tab} onClick={() => setTab(name)}>
                  {name}
                </ListTab>
              ))}
            </ListTabs>
            <ListTools>
              <ListSearch>
                <MdSearch size={38} />
                <input type="search" placeholder="Search" aria-label="Search conversations" />
              </ListSearch>
              <button type="button" aria-label="Filter">
                <FunnelIcon />
              </button>
              <button type="button" aria-label="New conversation">
                <SquarePen size={34} strokeWidth={1.8} />
              </button>
            </ListTools>
            <ResultsBar>
              <ResultsLabel>
                <CheckBox type="checkbox" />
                2339 RESULTS
              </ResultsLabel>
              <SortPicker>
                <select aria-label="Sort">
                  <option>Latest-All</option>
                </select>
                <ChevronDown size={30} strokeWidth={4} />
              </SortPicker>
            </ResultsBar>
            <ListBody>
              <Rows>
                {conversations.map(({ name, text, stars, color, badge }) => (
                  <li key={name}>
                    <Row href="#" $active={name === selected} onClick={() => setSelected(name)}>
                      <Avatar $size={107} $color={color}>
                        {name[0]}
                        <Badge>{badgeIcons[badge]}</Badge>
                      </Avatar>
                      <RowText>
                        <RowName>{name}</RowName>
                        {stars ? (
                          <Stars>
                            {Array.from({ length: stars }, (_, i) => (
                              <MdStar key={i} size={45} />
                            ))}
                          </Stars>
                        ) : (
                          <RowPreview>{text}</RowPreview>
                        )}
                      </RowText>
                    </Row>
                  </li>
                ))}
              </Rows>
              <ScrollBar width={26} top={34} height={354} />
            </ListBody>
          </ListPanel>

          <ChatPanel>
            <ChatHeader>
              <h2>Alexander</h2>
              <Toolbar>
                <ToolButton type="button" aria-label="Star">
                  <BsStar size={31} />
                </ToolButton>
                <ToolButton type="button" aria-label="Mark as read">
                  <BsEnvelopeOpen size={31} />
                </ToolButton>
                <ToolButton type="button" aria-label="Delete">
                  <TrashIcon />
                </ToolButton>
                <ToolButton type="button" aria-label="Filter messages">
                  <LinesIcon />
                </ToolButton>
              </Toolbar>
            </ChatHeader>

            <ChatBody>
              <Messages>
                <ChatMessage letter="A" color="#04c062" top={0} drop={54} bottom={12} width={300}>
                  It's an e-commerce site for handmade jewelry. I want more organic traffic and better
                  search rankings.
                </ChatMessage>
                <ChatMessage
                  letter="C"
                  color="#024bab"
                  mine
                  top={-6}
                  inset={10}
                  drop={41}
                  bottom={14}
                  width={276}
                >
                  We'll start with an SEO audit to identify improvements. It takes about 2 days.
                </ChatMessage>
                <DatePill>May 4th 2024</DatePill>
                <Message>
                  <Avatar $size={66} $color="#04c062">
                    A
                  </Avatar>
                  <CallInfo>
                    <CallIcon>
                      <FaPhone size={43} />
                    </CallIcon>
                    Inbound Call
                    <time>02:53 AM</time>
                  </CallInfo>
                </Message>
                <ChatMessage letter="C" color="#024bab" mine top={18} drop={49} bottom={21} width={299}>
                  Hi this is Meetzizi, I saw that we just missed your call how can I help?
                </ChatMessage>
              </Messages>
              <ScrollBar top={281} height={354} arrows />

              <Details>
                <Profile>
                  <ProfileAvatar $size={93} $color="#b196fe">
                    W
                  </ProfileAvatar>
                  <ProfileName>
                    (571) 698-8745
                    <button type="button" aria-label="Edit name">
                      <PencilIcon />
                    </button>
                  </ProfileName>
                  <ContactActions>
                    <RoundButton type="button" aria-label="Call">
                      <BsTelephone size={31} />
                    </RoundButton>
                    <RoundButton type="button" aria-label="Send email">
                      <MailIcon />
                    </RoundButton>
                  </ContactActions>
                </Profile>
                <Section $top={34} $bottom={0}>
                  <FieldHead $strong>
                    <h3>Contact</h3>
                    <button type="button" aria-label="Collapse contact">
                      <ChevronUp size={32} strokeWidth={2} />
                    </button>
                  </FieldHead>
                </Section>
                <Section $top={38} $bottom={26} $line>
                  <FieldHead>
                    <h3>
                      <FieldIcon>
                        <MailIcon />
                      </FieldIcon>
                      Email
                    </h3>
                    <AddButton type="button" aria-label="Add email">
                      <PlusIcon />
                    </AddButton>
                  </FieldHead>
                  <FieldValue>info@gmail.com</FieldValue>
                </Section>
                <Section $top={32} $bottom={46} $line>
                  <FieldHead>
                    <h3>
                      <FieldIcon>
                        <BsTelephone size={32} />
                      </FieldIcon>
                      Phone
                    </h3>
                    <AddButton type="button" aria-label="Add phone">
                      <PlusIcon />
                    </AddButton>
                  </FieldHead>
                  <FieldValue $wide>(571) 698-8745</FieldValue>
                </Section>
                <Section $top={23} $bottom={39} $line>
                  <FieldHead>
                    <h3>
                      <FieldIcon>
                        <PersonIcon />
                      </FieldIcon>
                      Owner (Assigned to)
                    </h3>
                  </FieldHead>
                  <OwnerPicker>
                    <select aria-label="Owner">
                      <option>Manager</option>
                    </select>
                    <ChevronDown size={32} strokeWidth={1.6} />
                  </OwnerPicker>
                </Section>
                <Section $top={29} $bottom={48} $line>
                  <FieldHead $large>
                    <h3>Tags</h3>
                    <button type="button" aria-label="Expand tags">
                      <ChevronDown size={32} strokeWidth={2} />
                    </button>
                  </FieldHead>
                </Section>
              </Details>
              <ScrollBar top={17} height={354} arrows />
            </ChatBody>

            <Composer onSubmit={(e) => e.preventDefault()}>
              <ComposerTabs>
                {channels.map((name) => (
                  <ComposerTab
                    key={name}
                    type="button"
                    $active={name === channel}
                    onClick={() => setChannel(name)}
                  >
                    {name}
                  </ComposerTab>
                ))}
                <CollapseButton type="button" aria-label="Collapse">
                  <CollapseIcon />
                </CollapseButton>
              </ComposerTabs>
              <MessageBox
                aria-label="Message"
                placeholder="Type a message"
                value={message}
                onChange={(e) => setMessage(e.target.value)}
              />
              <ComposerFoot>
                <FootTools>
                  <button type="button" aria-label="Attach file">
                    <ClipIcon />
                  </button>
                  <button type="button" aria-label="Emoji">
                    <Smile size={36} strokeWidth={1.9} />
                  </button>
                  <button type="button" aria-label="Templates">
                    <DocIcon />
                  </button>
                  <button type="button" aria-label="Request payment">
                    <DollarIcon />
                  </button>
                  <button type="button" aria-label="More">
                    <PlusIcon />
                  </button>
                </FootTools>
                <ClearButton type="button" onClick={() => setMessage('')}>
                  Clear
                </ClearButton>
                <SendGroup>
                  <SendButton type="submit">Send</SendButton>
                  <SendButton type="button" aria-label="Schedule" $icon>
                    <ScheduleIcon />
                  </SendButton>
                </SendGroup>
              </ComposerFoot>
            </Composer>
          </ChatPanel>

          <Rail aria-label="Contact panels">
            {railItems.map(({ label, icon, gap }) => (
              <RailButton
                key={label}
                type="button"
                aria-label={label}
                $gap={gap}
                $active={label === panel}
                onClick={() => setPanel(label)}
              >
                {icon}
              </RailButton>
            ))}
          </Rail>
        </Workspace>
      </Main>
    </Page>
  );
};

export default App;
